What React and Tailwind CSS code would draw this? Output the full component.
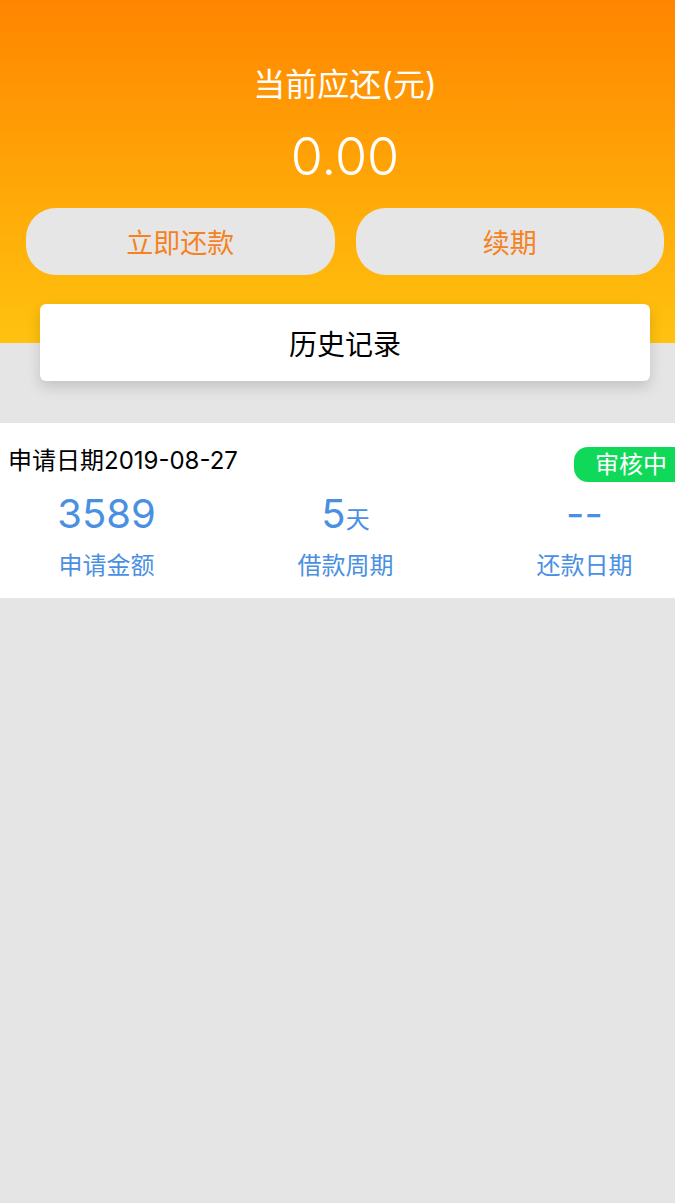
const font = { fontFamily: 'Inter, "Noto Sans CJK SC", sans-serif' };

const Stat = ({ value, unit, label }) => (
  <div className="w-[95px] flex flex-col items-center">
    <p className="h-[48px] leading-[48px] text-[40px] text-[#4a90e2] whitespace-nowrap">
      {value}
      {unit && <span className="text-[24px]">{unit}</span>}
    </p>
    <p className="mt-[13px] leading-[30px] text-[24px] text-[#4a90e2] whitespace-nowrap">{label}</p>
  </div>
);

const App = () => {
  return (
    <div className="min-h-[1203px] bg-[#e5e5e5] overflow-hidden" style={font}>
      <div className="w-[690px]">
        {/* 顶部 */}
        <div className="h-[343px] bg-gradient-to-b from-[#ff8500] to-[#ffc20f] pt-[67px]">
          <p className="text-center text-white text-[32px] leading-[36px]">当前应还(元)</p>
          <p className="mt-[24px] text-center text-white text-[52px] leading-[60px] font-light">0.00</p>
          <div className="mt-[21px] flex gap-[21px] px-[26px]">
            <button
              type="button"
              className="flex-1 h-[67px] pt-[5px] rounded-[30px] bg-[#e6e6e6] text-[#f5821f] text-[27px]"
            >
              立即还款
            </button>
            <button
              type="button"
              className="flex-1 h-[67px] pt-[5px] rounded-[30px] bg-[#e6e6e6] text-[#f5821f] text-[27px]"
            >
              续期
            </button>
          </div>
        </div>

        <div className="relative -mt-[39px] mx-[40px] h-[77px] pt-[5px] rounded-[6px] bg-white shadow-[0_6px_14px_rgba(0,0,0,0.15)] flex items-center justify-center">
          <p className="text-[28px] text-black">历史记录</p>
        </div>

        {/* 记录 */}
        <div className="mt-[42px] h-[175px] bg-white pt-[24px]">
          <div className="flex items-start justify-between h-[35px]">
            <p className="pl-2 text-[24px] leading-[28px] text-black">申请日期2019-08-27</p>
            <span className="h-[35px] w-[116px] pl-[21px] rounded-l-[14px] bg-[#10d95a] text-white text-[24px] leading-[35px]">
              审核中
            </span>
          </div>
          <div className="mt-[8px] flex gap-[144px] pl-[59px]">
            <Stat value="3589" label="申请金额" />
            <Stat value="5" unit="天" label="借款周期" />
            <Stat value="--" label="还款日期" />
          </div>
        </div>
      </div>
    </div>
  );
};

export default App;
